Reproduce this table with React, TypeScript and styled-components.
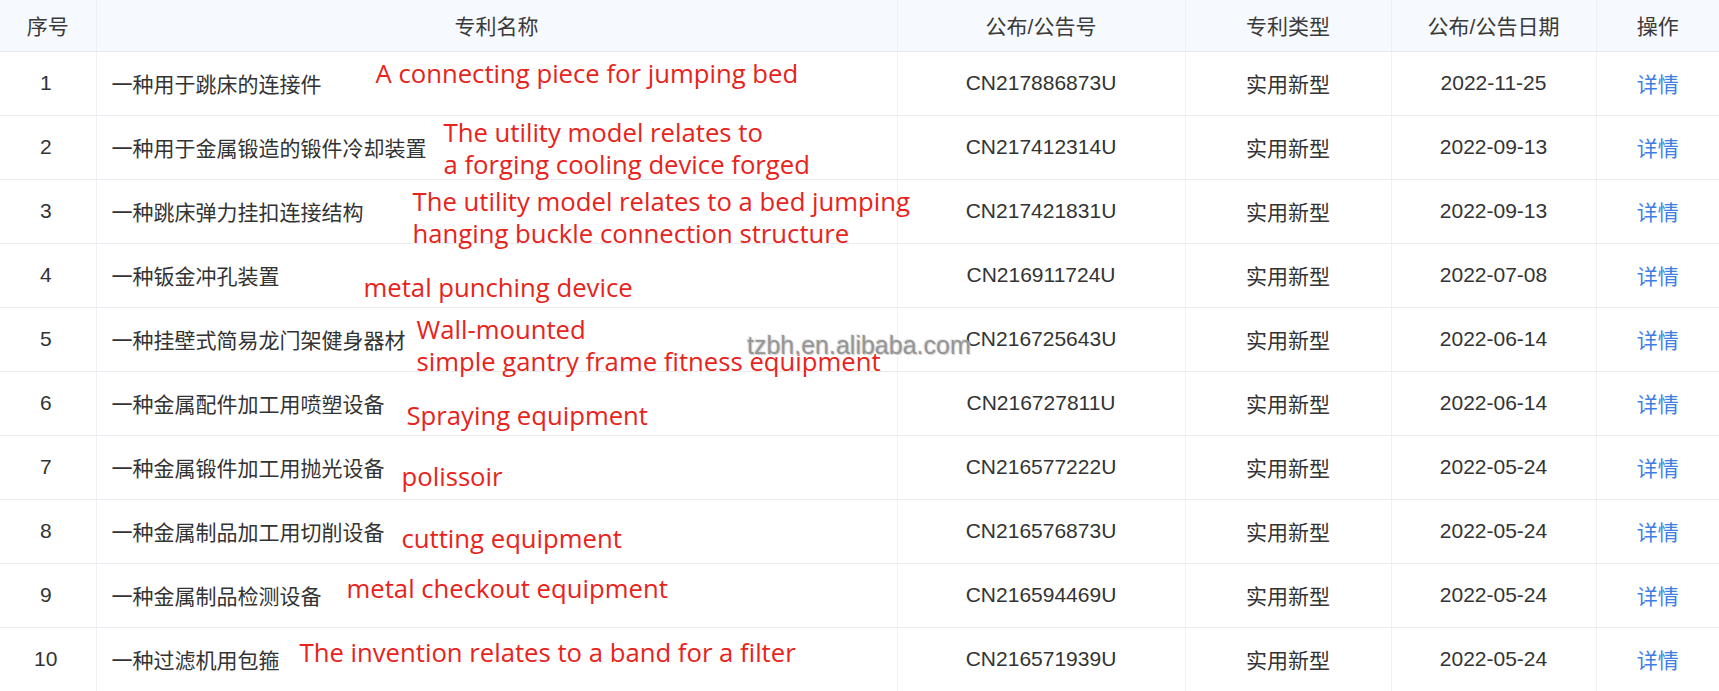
import React from "react";
import styled, { createGlobalStyle } from "styled-components";

type Note = { left: number; top: number; lines: string[] };

type Patent = {
    no: number;
    name: string;
    code: string;
    kind: string;
    date: string;
    note: Note;
};

const Columns = [
    { width: 96, name: "序号" },
    { width: 801, name: "专利名称" },
    { width: 288, name: "公布/公告号" },
    { width: 206, name: "专利类型" },
    { width: 205, name: "公布/公告日期" },
    { width: 123, name: "操作" },
];

const PatentData: Patent[] = [
    {
        no: 1,
        name: "一种用于跳床的连接件",
        code: "CN217886873U",
        kind: "实用新型",
        date: "2022-11-25",
        note: { left: 279, top: 6.5, lines: ["A connecting piece for jumping bed"] },
    },
    {
        no: 2,
        name: "一种用于金属锻造的锻件冷却装置",
        code: "CN217412314U",
        kind: "实用新型",
        date: "2022-09-13",
        note: {
            left: 347,
            top: 1,
            lines: ["The utility model relates to", "a forging cooling device forged"],
        },
    },
    {
        no: 3,
        name: "一种跳床弹力挂扣连接结构",
        code: "CN217421831U",
        kind: "实用新型",
        date: "2022-09-13",
        note: {
            left: 316,
            top: 6,
            lines: [
                "The utility model relates to a bed jumping",
                "hanging buckle connection structure",
            ],
        },
    },
    {
        no: 4,
        name: "一种钣金冲孔装置",
        code: "CN216911724U",
        kind: "实用新型",
        date: "2022-07-08",
        note: { left: 267, top: 28.5, lines: ["metal punching device"] },
    },
    {
        no: 5,
        name: "一种挂壁式简易龙门架健身器材",
        code: "CN216725643U",
        kind: "实用新型",
        date: "2022-06-14",
        note: {
            left: 320,
            top: 6,
            lines: ["Wall-mounted", "simple gantry frame fitness equipment"],
        },
    },
    {
        no: 6,
        name: "一种金属配件加工用喷塑设备",
        code: "CN216727811U",
        kind: "实用新型",
        date: "2022-06-14",
        note: { left: 310, top: 28, lines: ["Spraying equipment"] },
    },
    {
        no: 7,
        name: "一种金属锻件加工用抛光设备",
        code: "CN216577222U",
        kind: "实用新型",
        date: "2022-05-24",
        note: { left: 305, top: 25, lines: ["polissoir"] },
    },
    {
        no: 8,
        name: "一种金属制品加工用切削设备",
        code: "CN216576873U",
        kind: "实用新型",
        date: "2022-05-24",
        note: { left: 305, top: 23.5, lines: ["cutting equipment"] },
    },
    {
        no: 9,
        name: "一种金属制品检测设备",
        code: "CN216594469U",
        kind: "实用新型",
        date: "2022-05-24",
        note: { left: 250, top: 9.5, lines: ["metal checkout equipment"] },
    },
    {
        no: 10,
        name: "一种过滤机用包箍",
        code: "CN216571939U",
        kind: "实用新型",
        date: "2022-05-24",
        note: { left: 203, top: 9, lines: ["The invention relates to a band for a filter"] },
    },
];

export default function App() {
    return (
        <>
            <GlobalStyle />
            <Page>
                <PatentTable>
                    <colgroup>
                        {Columns.map((el, idx) => (
                            <col key={idx} style={{ width: el.width }} />
                        ))}
                    </colgroup>
                    <thead>
                        <HeadRow>
                            {Columns.map((el, idx) => (
                                <HeadCell key={idx}>{el.name}</HeadCell>
                            ))}
                        </HeadRow>
                    </thead>
                    <tbody>
                        {PatentData.map((el) => (
                            <BodyRow key={el.no}>
                                <NoCell>{el.no}</NoCell>
                                <NameCell>
                                    {el.name}
                                    <Annotation $left={el.note.left} $top={el.note.top}>
                                        {el.note.lines.map((line, idx) => (
                                            <div key={idx}>{line}</div>
                                        ))}
                                    </Annotation>
                                </NameCell>
                                <Cell>{el.code}</Cell>
                                <Cell>{el.kind}</Cell>
                                <Cell>{el.date}</Cell>
                                <Cell>
                                    <DetailLink>详情</DetailLink>
                                </Cell>
                            </BodyRow>
                        ))}
                    </tbody>
                </PatentTable>
                <Watermark>tzbh.en.alibaba.com</Watermark>
            </Page>
        </>
    );
}

const GlobalStyle = createGlobalStyle`
    html, body {
        margin: 0;
        padding: 0;
        background: #ffffff;
        overflow: hidden;
    }
`;

const Page = styled.div`
    position: relative;
    width: 1719px;
    height: 691px;
    overflow: hidden;
    font-family: "Liberation Sans", "Noto Sans CJK SC", sans-serif;
    color: #333333;
`;

const PatentTable = styled.table`
    width: 1719px;
    table-layout: fixed;
    border-collapse: collapse;
    font-size: 21px;
`;

const HeadRow = styled.tr`
    height: 51px;
    background: #f6f9fd;
`;

const HeadCell = styled.th`
    font-weight: normal;
    color: #3a3a3a;
    text-align: center;
    padding: 0;
    border-bottom: 1px solid #e6ebf2;
    border-right: 1px solid #edf1f6;

    &:last-child {
        border-right: none;
    }
`;

const BodyRow = styled.tr`
    height: 64px;
`;

const Cell = styled.td`
    text-align: center;
    padding: 0;
    border-bottom: 1px solid #e8ecf2;
    border-right: 1px solid #eef1f5;
    white-space: nowrap;

    &:last-child {
        border-right: none;
    }
`;

const NoCell = styled(Cell)`
    padding-right: 4px;
`;

const NameCell = styled(Cell)`
    position: relative;
    text-align: left;
    padding-left: 15px;
`;

const Annotation = styled.div<{ $left: number; $top: number }>`
    position: absolute;
    left: ${(p) => p.$left}px;
    top: ${(p) => p.$top}px;
    font-family: "Open Sans", Lato, sans-serif;
    font-size: 25.7px;
    line-height: 32px;
    color: #e8231b;
    white-space: nowrap;
    z-index: 1;
`;

const DetailLink = styled.span`
    color: #3e7fe4;
    cursor: pointer;
`;

const Watermark = styled.div`
    position: absolute;
    left: 747px;
    top: 332px;
    font-family: "Liberation Sans", Arial, sans-serif;
    font-size: 25px;
    line-height: 1.117;
    color: #959595;
    text-shadow: 1px 1px 1px #d0d0d0, -1px -1px 1px #e4e4e4;
    z-index: 2;
    pointer-events: none;
`;
